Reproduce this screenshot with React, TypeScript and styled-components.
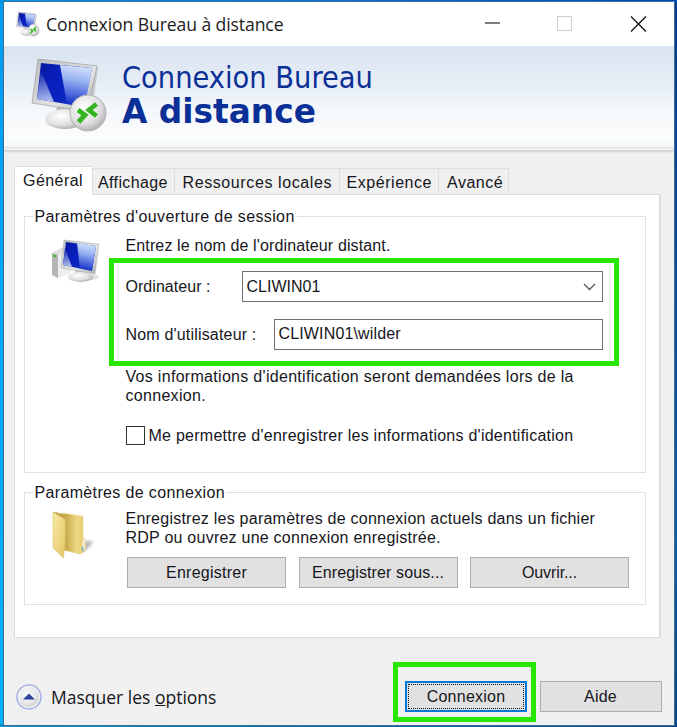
import React from "react";
import styled, { createGlobalStyle } from "styled-components";

const GlobalStyle = createGlobalStyle`
  * { box-sizing: border-box; }
  body { margin: 0; overflow: hidden; }
`;

const green = "#27e600";

const Desktop = styled.div`
  width: 677px;
  height: 727px;
  padding: 1px 2px 1px 3px;
  background:
    linear-gradient(90deg, #0094e6, #0a6fd6 50%, #0045b4) top / 100% 3px no-repeat,
    linear-gradient(90deg, #0797cf, #0a4585) bottom / 100% 3px no-repeat,
    linear-gradient(#0b3a8c, #0e5c9c 75%, #0a4585) right / 3px 100% no-repeat,
    linear-gradient(#009cf2, #00b2f8);
`;

const Window = styled.main`
  height: 725px;
  display: flex;
  flex-direction: column;
  border: 1px solid #3c6f98;
  background: #f0f0f0;
  color: #16161c;
  font: 16px/19px "Liberation Sans", Arial, sans-serif;
`;

const TitleBar = styled.header`
  height: 44px;
  flex: none;
  display: flex;
  align-items: center;
  padding: 0 27px 0 12px;
  background: #fff;
`;

const TitleText = styled.h1`
  flex: 1;
  margin: 0 0 0 6px;
  font: 400 17.6px/24px "Open Sans", sans-serif;
  letter-spacing: -0.1px;
  color: #1c1c1c;
`;

const Banner = styled.div`
  height: 107px;
  flex: none;
  display: flex;
  padding: 12px 0 0 26px;
  background:
    linear-gradient(#dcdcdc, #f4f4f4 30%, #efefef 45%, #d6d6d6 60%, #dadada 80%, #f0f0f0) bottom / 100% 6px no-repeat,
    linear-gradient(#d9e4f1, #e6edf6 35%, #f5f8fb 62%, #fbfcfc 85%, #f2f7fb);
`;

const BannerText = styled.div`
  margin: 2px 0 0 12px;
  color: #0a2f96;
  font-family: "DejaVu Sans", Verdana, sans-serif;
`;

const BannerLine = styled.div`
  font: 400 30.4px/35px "DejaVu Sans Condensed", "DejaVu Sans", Tahoma, sans-serif;
  font-stretch: condensed;
`;

const BannerStrong = styled.div`
  font-size: 32.8px;
  line-height: 35px;
  font-weight: 700;
`;

const Tabs = styled.nav`
  display: flex;
  align-items: flex-end;
  height: 41px;
  flex: none;
  margin-left: 10px;
`;

const Tab = styled.div<{ $w: number; $pad: number; $active?: boolean; $ls: number }>`
  position: relative;
  width: ${(p) => p.$w}px;
  height: ${(p) => (p.$active ? 29 : 26)}px;
  padding: 4px 0 0 ${(p) => p.$pad}px;
  border: solid #dedede;
  border-width: ${(p) => (p.$active ? "1px 1px 0" : "1px 1px 0 0")};
  background: ${(p) => (p.$active ? "#fff" : "#f0f0f0")};
  margin-bottom: ${(p) => (p.$active ? "-1px" : "0")};
  letter-spacing: ${(p) => p.$ls}px;
  white-space: nowrap;
`;

const Panel = styled.section`
  width: 647px;
  height: 444px;
  flex: none;
  margin-left: 10px;
  padding: 21px 14px 0 9px;
  border: 1px solid #dcdcdc;
  border-right-width: 2px;
  background: #fff;
`;

const Group = styled.section<{ $h: number }>`
  width: 622px;
  height: ${(p) => p.$h}px;
  margin-bottom: 19px;
  border: 1px solid #e0e0e0;
`;

const Legend = styled.h2<{ $ls: number }>`
  width: fit-content;
  height: 19px;
  margin: -10px 0 0 8px;
  padding: 0 2px 0 1.5px;
  background: #fff;
  font: inherit;
  letter-spacing: ${(p) => p.$ls}px;
  white-space: nowrap;
`;

const GroupBody = styled.div<{ $top: number }>`
  display: grid;
  grid-template-columns: 74px 1fr;
  padding: ${(p) => p.$top}px 0 0 26.5px;
`;

const Text = styled.p<{ $ls: number }>`
  margin: 0;
  letter-spacing: ${(p) => p.$ls}px;
  white-space: nowrap;
`;

const Fields = styled.div`
  position: relative;
  display: flex;
  flex-direction: column;
  gap: 17px;
  margin: 16px 0 17px;
  width: 477.5px;
`;

const Highlight = styled.div`
  position: absolute;
  inset: -13px -15.5px -16px -16.5px;
  border: 5px solid ${green};
  pointer-events: none;
`;

const Field = styled.label`
  display: flex;
  align-items: center;
  justify-content: space-between;
`;

const Entry = styled.div<{ $w: number; $ls: number }>`
  width: ${(p) => p.$w}px;
  height: 31px;
  display: flex;
  justify-content: space-between;
  align-items: center;
  padding: 0 6px 3px 3.5px;
  border: 1px solid #707070;
  letter-spacing: ${(p) => p.$ls}px;
`;

const Combo = styled(Entry)`
  padding-bottom: 0;
`;

const CheckLabel = styled.label`
  display: flex;
  align-items: center;
  gap: 4px;
  margin-top: 21px;
  letter-spacing: 0.25px;
  white-space: nowrap;
`;

const CheckBox = styled.span`
  width: 19px;
  height: 19px;
  border: 1px solid #333;
  background: #fff;
`;

const ButtonRow = styled.div`
  display: flex;
  gap: 12.5px;
  margin: 10px 0 0 1.5px;
`;

const Button = styled.button<{ $w: number; $ls?: number }>`
  width: ${(p) => p.$w}px;
  height: 31px;
  padding: 0 0 1px;
  border: 1px solid #adadad;
  background: #e1e1e1;
  color: inherit;
  font: inherit;
  letter-spacing: ${(p) => p.$ls ?? 0.25}px;
`;

const PrimaryButton = styled(Button)`
  border: 2px solid #0078d7;
  outline: 1px dotted #111;
  outline-offset: -4px;
`;

const Footer = styled.footer`
  flex: 1;
  display: flex;
  align-items: flex-start;
  padding: 43px 12.5px 0 12px;
`;

const Toggle = styled.div`
  flex: 1;
  display: flex;
  align-items: center;
  gap: 9px;
  height: 31px;
  font: 17.5px/24px "Open Sans", sans-serif;
`;

const Anchor = styled.div`
  position: relative;
  margin-right: 12.5px;
`;

const ConnectHighlight = styled(Highlight)`
  inset: -19px -9px -10px -12px;
`;

const TitleIcon = () => (
  <svg width="24" height="26" viewBox="10 6 78 76" preserveAspectRatio="none">
    <RemoteArt />
  </svg>
);

const RemoteArt = () => (
  <>
    <defs>
      <linearGradient id="scr" x1="0" y1="0" x2="1" y2=".4">
        <stop offset="0" stopColor="#0718a0" />
        <stop offset=".45" stopColor="#0820bd" />
        <stop offset="1" stopColor="#1030c0" />
      </linearGradient>
      <linearGradient id="shine" x1=".55" y1="0" x2=".4" y2="1">
        <stop offset="0" stopColor="#d7e4fc" />
        <stop offset=".4" stopColor="#94aef2" />
        <stop offset="1" stopColor="#1230c8" />
      </linearGradient>
      <linearGradient id="glint" x1=".2" y1="0" x2=".3" y2="1">
        <stop offset="0" stopColor="#1226b0" />
        <stop offset="1" stopColor="#a9bbee" />
      </linearGradient>
      <linearGradient id="frame" x1="0" y1="0" x2="1" y2="1">
        <stop offset="0" stopColor="#b9bbbd" />
        <stop offset=".6" stopColor="#e3e3e3" />
        <stop offset="1" stopColor="#a6a8aa" />
      </linearGradient>
      <radialGradient id="disc" cx=".4" cy=".35" r=".7">
        <stop offset="0" stopColor="#ffffff" />
        <stop offset=".65" stopColor="#dedede" />
        <stop offset="1" stopColor="#a9a9a9" />
      </radialGradient>
    </defs>
    <path d="M36 56 L34 66 Q46 70 56 67 L55 58Z" fill="#b2b4b6" />
    <ellipse cx="44" cy="68" rx="20" ry="10" fill="url(#disc)" />
    <path d="M70 15 L77 16 L72 52 L66 58Z" fill="#c6c8ca" />
    <path d="M17 8 L76 15 L66 61 L11 52Z" fill="url(#frame)" stroke="#9c9fa1" strokeWidth=".7" />
    <path d="M20 12 L71 17 L63 56 L16 48Z" fill="url(#scr)" />
    <path d="M39 14 L71 17 L64 54 L46 53Z" fill="url(#shine)" />
    <path d="M20 20 L33 51 L16 48Z" fill="url(#glint)" />
    <circle cx="67" cy="62" r="18" fill="url(#disc)" stroke="#b3b3b3" />
    <path d="M57 59 L64 64 L57.500 71" fill="none" stroke="#35b422" strokeWidth="4.800" />
    <path d="M75.500 53 L68 59 L75.500 65" fill="none" stroke="#35b422" strokeWidth="4.800" />
  </>
);

const ComputerIcon = () => (
  <svg width="70" height="60" viewBox="0 0 70 60">
    <ellipse cx="50" cy="46" rx="9" ry="3" fill="#e2e2e2" />
    <path d="M12 22 L25 15 L31 18 V41 L18 47 L12 44Z" fill="#dedede" />
    <path d="M12 22 L18 24 V47 L12 44Z" fill="#b5b5b5" />
    <path d="M18 24 L31 18 V41 L18 47Z" fill="#ededed" />
    <path d="M13 24.5 L16 25.2" stroke="#39c41f" strokeWidth="2" />
    <path d="M36 36 L34 45 H48 V39Z" fill="#bdbdbd" />
    <ellipse cx="40.500" cy="46" rx="12.500" ry="5" fill="url(#disc)" />
    <path d="M24 9 L59 13 L55 43 L21 37Z" fill="url(#frame)" stroke="#aeb0b2" strokeWidth=".5" />
    <path d="M26 11 L56 15 L52 40 L23 34Z" fill="url(#scr)" />
    <path d="M37 12 L56 15 L52 39 L40 37Z" fill="url(#shine)" />
    <path d="M25 17 L32 36 L23 34Z" fill="url(#glint)" />
  </svg>
);

const FolderIcon = () => (
  <svg width="60" height="60" viewBox="0 0 60 60">
    <defs>
      <linearGradient id="fold" x1="0" y1="0" x2="1" y2="1">
        <stop offset="0" stopColor="#f7e9a4" />
        <stop offset="1" stopColor="#e3c764" />
      </linearGradient>
      <linearGradient id="foldIn">
        <stop offset="0" stopColor="#b99b40" />
        <stop offset=".4" stopColor="#c9ac4d" />
        <stop offset=".75" stopColor="#efd987" />
        <stop offset="1" stopColor="#e6c95e" />
      </linearGradient>
      <filter id="soft" x="-30%" y="-30%" width="160%" height="160%">
        <feGaussianBlur stdDeviation="1.6" />
      </filter>
    </defs>
    <path d="M30 50 L40 40 L48 40 Q46 47 36 51Z" fill="#999" opacity=".7" filter="url(#soft)" />
    <path d="M9 11 L22 12.500 L38 15 V37 L40 39 L40 50 L35 53 L18 49Z" fill="url(#foldIn)" stroke="#dcc77e" strokeWidth=".5" />
    <path d="M13 11.500 L22 12 L37 14.500" stroke="#faf6e4" strokeWidth="1.500" fill="none" />
    <path d="M8 11 L20 18.500 Q20.500 30 20 42 L18.500 57 L8 47Z" fill="url(#fold)" stroke="#d9c474" strokeWidth=".6" />
    <path d="M37 39 Q40 36 40.500 40 V49 L37 51Z" fill="#f5eccb" stroke="#d6bf70" strokeWidth=".5" />
    <path d="M37.700 46 V50" stroke="#6ab2e2" strokeWidth="1.500" />
  </svg>
);

const IconCell = styled.div<{ $x: number; $y: number }>`
  height: 0;
  margin: ${(p) => p.$y}px 0 0 ${(p) => p.$x}px;
`;

const Controls = styled.svg`
  display: block;
`;

export default function App() {
  return (
    <Desktop>
      <GlobalStyle />
      <Window>
        <TitleBar>
          <TitleIcon />
          <TitleText>Connexion Bureau à distance</TitleText>
          <Controls width="162" height="20" fill="none">
            <path d="M0 9H15" stroke="#333" strokeWidth="1.300" />
            <rect x="72.500" y="2.500" width="14" height="14" stroke="#cfcfcf" />
            <path d="M146 2.500l15 15M161 2.500l-15 15" stroke="#111" strokeWidth="1.300" />
          </Controls>
        </TitleBar>

        <Banner>
          <svg width="80" height="78" viewBox="9 7 80 78">
            <RemoteArt />
          </svg>
          <BannerText>
            <BannerLine>Connexion Bureau</BannerLine>
            <BannerStrong>A distance</BannerStrong>
          </BannerText>
        </Banner>

        <Tabs>
          <Tab $w={79} $pad={8} $ls={0.45} $active>Général</Tab>
          <Tab $w={82} $pad={5} $ls={0.38}>Affichage</Tab>
          <Tab $w={165} $pad={7.5} $ls={0.6}>Ressources locales</Tab>
          <Tab $w={99} $pad={6.5} $ls={0.55}>Expérience</Tab>
          <Tab $w={70} $pad={8} $ls={0.5}>Avancé</Tab>
        </Tabs>

        <Panel>
          <Group $h={257}>
            <Legend $ls={0.38}>Paramètres d'ouverture de session</Legend>
            <GroupBody $top={10}>
              <IconCell $x={-11.5} $y={-5}><ComputerIcon /></IconCell>
              <div>
                <Text $ls={0.13}>Entrez le nom de l'ordinateur distant.</Text>
                <Fields>
                  <Field>
                    <Text as="span" $ls={0.05}>Ordinateur :</Text>
                    <Combo $w={361} $ls={0}>
                      CLIWIN01
                      <svg width="13" height="8" fill="none">
                        <path d="M1 1l5.500 5.500L12 1" stroke="#555" strokeWidth="1.300" />
                      </svg>
                    </Combo>
                  </Field>
                  <Field>
                    <Text as="span" $ls={0.18}>Nom d'utilisateur :</Text>
                    <Entry $w={329} $ls={0.15}>CLIWIN01\wilder</Entry>
                  </Field>
                  <Highlight />
                </Fields>
                <Text $ls={0.3}>
                  Vos informations d'identification seront demandées lors de la
                  <br />
                  connexion.
                </Text>
                <CheckLabel>
                  <CheckBox />
                  Me permettre d'enregistrer les informations d'identification
                </CheckLabel>
              </div>
            </GroupBody>
          </Group>

          <Group $h={113}>
            <Legend $ls={0.35}>Paramètres de connexion</Legend>
            <GroupBody $top={7}>
              <IconCell $x={-6.5} $y={-8}><FolderIcon /></IconCell>
              <div>
                <Text $ls={0.24}>
                  Enregistrez les paramètres de connexion actuels dans un fichier
                  <br />
                  RDP ou ouvrez une connexion enregistrée.
                </Text>
                <ButtonRow>
                  <Button $w={159}>Enregistrer</Button>
                  <Button $w={159} $ls={0.12}>Enregistrer sous...</Button>
                  <Button $w={159} $ls={-0.1}>Ouvrir...</Button>
                </ButtonRow>
              </div>
            </GroupBody>
          </Group>
        </Panel>

        <Footer>
          <Toggle>
            <svg width="26" height="26" viewBox="0 0 26 26">
              <circle cx="13" cy="13" r="12" fill="#f2f3f5" stroke="#a9b2e4" strokeWidth="1.600" />
              <circle cx="13" cy="13" r="10" fill="url(#disc)" opacity=".55" />
              <path d="M7 15.500L13 9.500L19 15.500Z" fill="#2b429f" />
            </svg>
            <span>Masquer les <u>o</u>ptions</span>
          </Toggle>
          <Anchor>
            <PrimaryButton $w={122}>Connexion</PrimaryButton>
            <ConnectHighlight />
          </Anchor>
          <Button $w={122}>Aide</Button>
        </Footer>
      </Window>
    </Desktop>
  );
}
